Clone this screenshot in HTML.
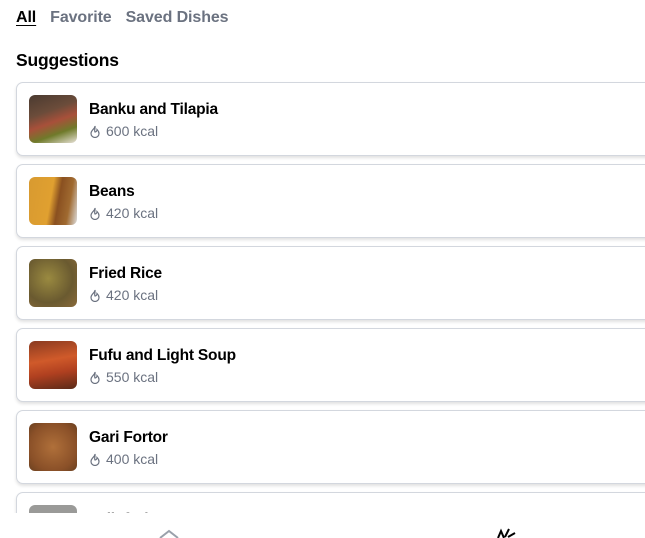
<!DOCTYPE html>
<html><head><meta charset="utf-8"><style>
*{margin:0;padding:0;box-sizing:border-box}
html,body{width:645px;height:538px;overflow:hidden}
body{background:#fff;font-family:"Liberation Sans",sans-serif;position:relative}
.tabs{position:absolute;top:9px;left:16px;font-size:16px;font-weight:bold;color:#6b7280;letter-spacing:-0.1px}
.tabs span{margin-right:14px}
.tabs .a{color:#000;text-decoration:underline;text-underline-offset:3px}
h2{position:absolute;top:50px;left:16px;font-size:17.5px;font-weight:bold;color:#000;letter-spacing:-0.2px}
.list{position:absolute;top:0;left:0;width:645px;height:513px;overflow:hidden}
.card{position:absolute;left:16px;width:660px;height:74px;border:1px solid #d3d7de;border-radius:7px;box-shadow:0 2px 3px rgba(0,0,0,0.12);background:#fff}
.img{position:absolute;left:12px;top:12px;width:48px;height:48px;border-radius:6px}
.t{position:absolute;left:72px;top:18px;font-size:15.5px;font-weight:bold;color:#000;letter-spacing:-0.2px}
.k{position:absolute;left:72px;top:40px;font-size:14px;color:#6b7280}
.k svg{vertical-align:-2px;margin-right:5px}
</style></head><body>
<div class="tabs"><span class="a">All</span><span>Favorite</span><span>Saved Dishes</span></div>
<h2>Suggestions</h2>
<div class="list">
<div class="card" style="top:82px"><div class="img" style="background:linear-gradient(160deg,#4a3a30 0%,#6b4c3a 35%,#a8503a 55%,#6f7a2a 75%,#e8e2d8 100%)"></div><div class="t">Banku and Tilapia</div><div class="k"><svg width="12" height="13" viewBox="0 0 12 13" fill="none" stroke="#6b7280" stroke-width="1.2"><path d="M6 1C6 4 2 5 2 8.5A4 4 0 0 0 10 8.5C10 6.5 9 5.5 8 4.5C8 6 7 7 6 7C5 5.5 6.5 3 6 1Z"/></svg>600 kcal</div></div>
<div class="card" style="top:164px"><div class="img" style="background:linear-gradient(100deg,#d89a30 0%,#e0a030 45%,#8a5020 60%,#a06a30 80%,#ddd 100%)"></div><div class="t">Beans</div><div class="k"><svg width="12" height="13" viewBox="0 0 12 13" fill="none" stroke="#6b7280" stroke-width="1.2"><path d="M6 1C6 4 2 5 2 8.5A4 4 0 0 0 10 8.5C10 6.5 9 5.5 8 4.5C8 6 7 7 6 7C5 5.5 6.5 3 6 1Z"/></svg>420 kcal</div></div>
<div class="card" style="top:246px"><div class="img" style="background:radial-gradient(circle at 40% 40%,#9a8a40,#6a5a30 60%,#8a6a3a)"></div><div class="t">Fried Rice</div><div class="k"><svg width="12" height="13" viewBox="0 0 12 13" fill="none" stroke="#6b7280" stroke-width="1.2"><path d="M6 1C6 4 2 5 2 8.5A4 4 0 0 0 10 8.5C10 6.5 9 5.5 8 4.5C8 6 7 7 6 7C5 5.5 6.5 3 6 1Z"/></svg>420 kcal</div></div>
<div class="card" style="top:328px"><div class="img" style="background:linear-gradient(170deg,#8a3a20 0%,#d05a2a 40%,#b04020 65%,#5a2a18 100%)"></div><div class="t">Fufu and Light Soup</div><div class="k"><svg width="12" height="13" viewBox="0 0 12 13" fill="none" stroke="#6b7280" stroke-width="1.2"><path d="M6 1C6 4 2 5 2 8.5A4 4 0 0 0 10 8.5C10 6.5 9 5.5 8 4.5C8 6 7 7 6 7C5 5.5 6.5 3 6 1Z"/></svg>550 kcal</div></div>
<div class="card" style="top:410px"><div class="img" style="background:radial-gradient(circle at 50% 50%,#b0703a,#8a5028 70%,#6a4020)"></div><div class="t">Gari Fortor</div><div class="k"><svg width="12" height="13" viewBox="0 0 12 13" fill="none" stroke="#6b7280" stroke-width="1.2"><path d="M6 1C6 4 2 5 2 8.5A4 4 0 0 0 10 8.5C10 6.5 9 5.5 8 4.5C8 6 7 7 6 7C5 5.5 6.5 3 6 1Z"/></svg>400 kcal</div></div>
<div class="card" style="top:492px"><div class="img" style="background:#9a9a98"></div><div class="t" style="color:#555">Jollof Rice</div></div>
</div>
<svg style="position:absolute;left:158px;top:529px" width="22" height="9" viewBox="0 0 22 9"><path d="M2 9L11 2L20 9" fill="none" stroke="#9aa1ab" stroke-width="2"/></svg>
<svg style="position:absolute;left:495px;top:527px" width="24" height="11" viewBox="0 0 24 11"><path d="M3 11L6 4L9 11M10 10L14 2M13 10L20 6" fill="none" stroke="#000" stroke-width="2"/></svg>
</body></html>
